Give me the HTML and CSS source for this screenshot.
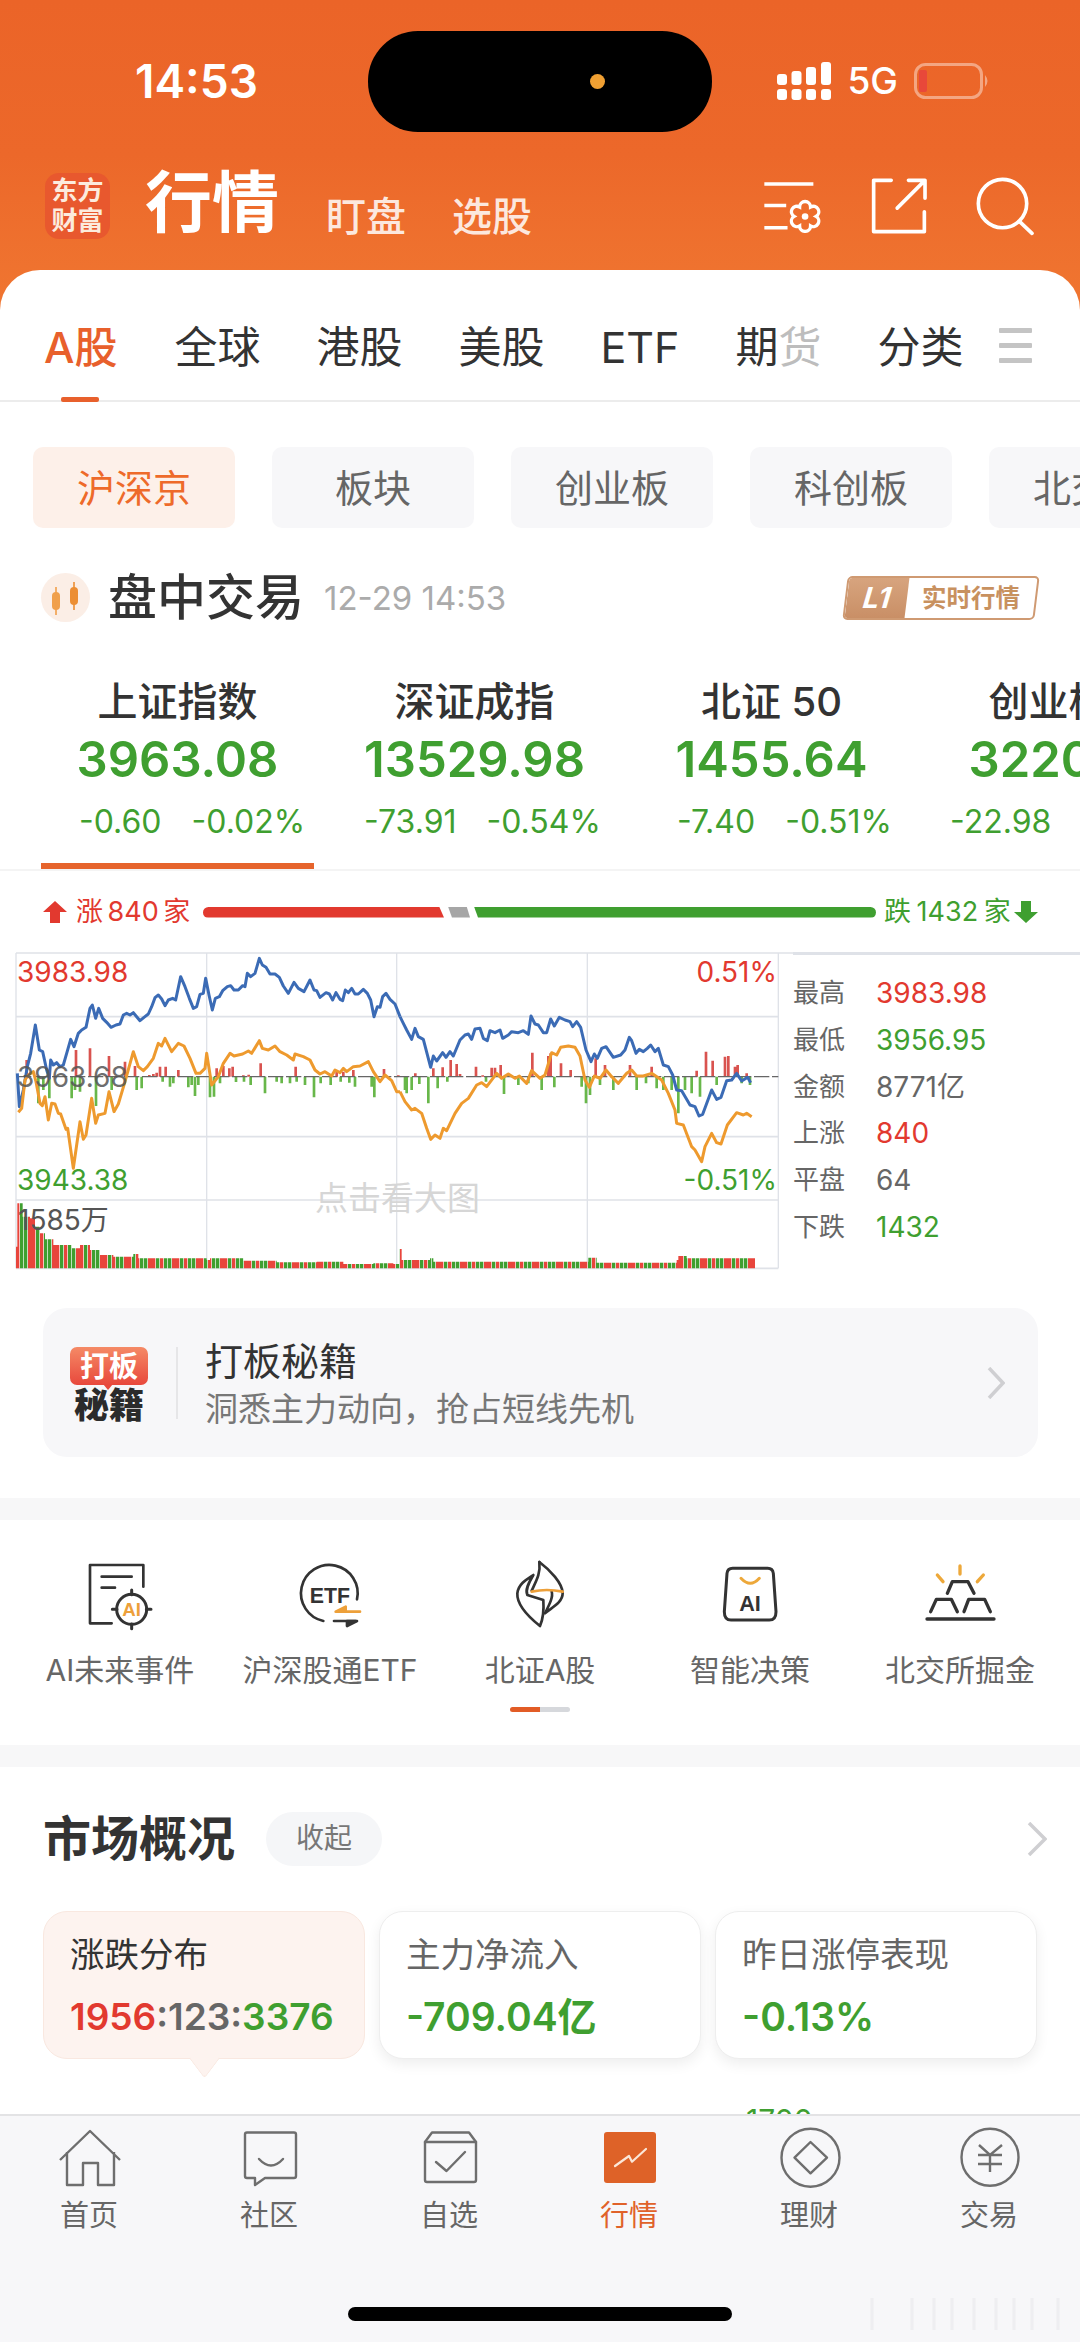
FILE: index.html
```html
<!DOCTYPE html>
<html lang="zh-CN">
<head>
<meta charset="utf-8">
<title>行情</title>
<link rel="stylesheet" href="styles.css">
</head>
<body>
<div class="phone">
  <main class="main">
    <header class="top">
      <div class="status">
        <span class="time">14:53</span>
        <div class="status-right">
          <svg class="signal" width="54" height="38" viewBox="0 0 54 38"><g fill="#fff"><rect x="0" y="27" width="10" height="11" rx="3"/><rect x="14.500" y="27" width="10" height="11" rx="3"/><rect x="29" y="27" width="10" height="11" rx="3"/><rect x="44" y="27" width="10" height="11" rx="3"/><rect x="0" y="12" width="10" height="11" rx="3"/><rect x="14.500" y="9" width="10" height="14" rx="3"/><rect x="29" y="5" width="10" height="18" rx="3"/><rect x="44" y="0" width="10" height="23" rx="3"/></g></svg>
          <span class="net">5G</span>
          <svg class="battery" width="76" height="36" viewBox="0 0 76 36"><rect x="1.500" y="1.500" width="66" height="33" rx="10" fill="none" stroke="#fff" stroke-opacity=".42" stroke-width="3"/><rect x="5" y="7" width="8" height="22" rx="2" fill="#E8483A"/><path d="M71 12q5 6 0 12z" fill="#fff" fill-opacity=".42"/></svg>
        </div>
      </div>
      <div class="island"><i class="island-dot"></i></div>
      <div class="titlebar">
        <div class="logo"><span>东方</span><span>财富</span></div>
        <h1 class="title">行情</h1>
        <a class="subnav subnav-first">盯盘</a>
        <a class="subnav">选股</a>
        <div class="top-icons">
          <svg width="61" height="53" viewBox="66 360 182 160" fill="none" stroke="#fff" stroke-width="11"><path d="M72 372H220M72 437H138M72 504H142"/><path d="M228 470A15 15 0 0 1 211.500 498.600A15 15 0 0 1 178.500 498.600A15 15 0 0 1 162 470A15 15 0 0 1 178.500 441.400A15 15 0 0 1 211.500 441.400A15 15 0 0 1 228 470Z" stroke-width="10"/><circle cx="195" cy="470" r="10" fill="#fff" stroke="none"/></svg>
          <svg width="58" height="58" viewBox="384 350 175 175" fill="none" stroke="#fff" stroke-width="11" stroke-linecap="round" stroke-linejoin="round"><path d="M448 360H395V515H548V455M466 444L546 364M500 360H550V414"/></svg>
          <svg width="59" height="59" viewBox="702 350 178 178" fill="none" stroke="#fff" stroke-width="11"><circle cx="785" cy="430" r="73"/><path d="M836 484L874 520" stroke-linecap="round"/></svg>
        </div>
      </div>
    </header>

    <section class="sheet">
      <nav class="tabs">
        <a class="tab tab-active">A股</a>
        <a class="tab">全球</a>
        <a class="tab">港股</a>
        <a class="tab">美股</a>
        <a class="tab">ETF</a>
        <a class="tab">期<span class="tab-fade">货</span></a>
        <a class="tab tab-last">分类</a>
        <span class="burger"><i></i><i></i><i></i></span>
      </nav>

      <div class="chips">
        <a class="chip chip-active">沪深京</a>
        <a class="chip">板块</a>
        <a class="chip">创业板</a>
        <a class="chip">科创板</a>
        <a class="chip">北交所</a>
      </div>

      <div class="session">
        <span class="session-icon">
          <svg width="49" height="49" viewBox="0 0 49 49"><g fill="#F0A04B"><rect x="11" y="19" width="8" height="18" rx="4"/><rect x="14.200" y="14" width="1.600" height="28"/><rect x="29" y="14" width="8" height="18" rx="4" fill="#EC8E33"/><rect x="32.200" y="9" width="1.600" height="28" fill="#EC8E33"/></g></svg>
        </span>
        <strong class="session-title">盘中交易</strong>
        <span class="session-time">12-29 14:53</span>
        <span class="badge"><b class="badge-l1">L1</b><span class="badge-text">实时行情</span></span>
      </div>

      <div class="indices">
        <div class="idx idx-active">
          <div class="idx-name">上证指数</div>
          <div class="idx-value">3963.08</div>
          <div class="idx-chg idx-chg-1"><span>-0.60</span><span>-0.02%</span></div>
        </div>
        <div class="idx">
          <div class="idx-name">深证成指</div>
          <div class="idx-value">13529.98</div>
          <div class="idx-chg idx-chg-2"><span>-73.91</span><span>-0.54%</span></div>
        </div>
        <div class="idx">
          <div class="idx-name">北证 50</div>
          <div class="idx-value">1455.64</div>
          <div class="idx-chg idx-chg-3"><span>-7.40</span><span>-0.51%</span></div>
        </div>
        <div class="idx">
          <div class="idx-name">创业板指</div>
          <div class="idx-value">3220.55</div>
          <div class="idx-chg idx-chg-4"><span>-22.98</span><span>-0.71%</span></div>
        </div>
      </div>

      <div class="breadth">
        <svg class="arrow" width="24" height="22" viewBox="0 0 24 22"><path d="M12 0L24 11H17V22H7V11H0Z" fill="#E2392F"/></svg>
        <span class="breadth-up">涨 840 家</span>
        <i class="bar bar-up"></i>
        <i class="bar bar-flat"></i>
        <i class="bar bar-down"></i>
        <span class="breadth-down">跌 1432 家</span>
        <svg class="arrow" width="24" height="22" viewBox="0 0 24 22"><path d="M12 22L24 11H17V0H7V11H0Z" fill="#3F9F30"/></svg>
      </div>

      <div class="chart-row">
        <div class="chart">
          <svg width="800" height="330" viewBox="0 0 2400 990" fill="none">
            <defs>
              <pattern id="vol" patternUnits="userSpaceOnUse" width="72" height="10">
                <rect width="72" height="10" fill="#fff"/>
                <rect x="0" width="10" height="10" fill="#3F9F30"/>
                <rect x="12" width="22" height="10" fill="#E8453C"/>
                <rect x="36" width="10" height="10" fill="#3F9F30"/>
                <rect x="48" width="10" height="10" fill="#E8453C"/>
                <rect x="60" width="10" height="10" fill="#3F9F30"/>
              </pattern>
            </defs>
            <g stroke="#DFE2E8" stroke-width="5">
              <path d="M48 9H2400M48 200H2335M48 560H2335M48 750H2335M48 955H2335"/>
              <path d="M48 9V955M620 9V955M1190 9V955M1762 9V955M2335 9V955" stroke-width="4"/>
            </g>
            <path d="M48 955V890L52 890V760H68V800H90V805H105V830H120V850H135V868H160V885H215V895H240V885H270V900H300V915H340V920H400V912H415V925H620V930H630V925H730V932H830V937H950V935H1030V942H1120V940H1180V942H1198V897H1205V930H1290V925H1300V935H1740V935H1765V923H1790V938H2030V930H2035V918H2060V925H2265V955Z" fill="url(#vol)"/>
            <g stroke-width="8">
              <g transform="translate(30)">
                <path stroke="#D9534F" d="M50 380V330M198 380V300M240 380V295M297 380V318M345 380V335M375 380V348M418 380V375M430 380V372M440 380V368M450 380V350M467 380V350M505 380V360M620 380V355M640 380V348M658 380V355M668 380V350M700 380V376M716 380V374M752 380V340M857 380V350M980 380V360M1000 380V365M1030 380V360M1122 380V357M1165 380V376"/>
                <path stroke="#68B74A" d="M85 380V460M100 380V420M118 380V445M185 380V445M195 380V420M210 380V425M258 380V468M305 380V420M380 380V420M395 380V415M458 380V395M480 380V410M490 380V400M535 380V412M545 380V405M555 380V438M565 380V405M600 380V442M612 380V440M630 380V400M678 380V396M702 380V395M722 380V405M765 380V430M800 380V395M815 380V400M840 380V400M860 380V395M885 380V405M912 380V442M932 380V400M962 380V405M992 380V395M1018 380V398M1035 380V410M1085 380V410M1093 380V442M1190 380V430"/>
              </g>
              <g transform="translate(1200)">
                <path stroke="#D9534F" d="M46 380V370M100 380V355M128 380V352M152 380V330M170 380V342M180 380V372M228 380V350M248 380V376M275 380V353M285 380V353M302 380V345M397 380V308M445 380V318M452 380V310M483 380V340M512 380V360M587 380V325M615 380V345M690 380V345M755 380V350M890 380V362M918 380V305M938 380V332M975 380V320M985 380V318M1005 380V350M1013 380V345M1040 380V370"/>
                <path stroke="#68B74A" d="M15 380V420M35 380V420M58 380V402M85 380V460M113 380V415M142 380V395M258 380V395M312 380V432M355 380V405M385 380V400M425 380V420M463 380V412M545 380V410M558 380V460M570 380V435M600 380V405M640 380V420M710 380V420M738 380V400M770 380V415M790 380V420M815 380V420M835 380V490M855 380V420M875 380V430M900 380V440M950 380V405M1025 380V400M1050 380V405"/>
              </g>
            </g>
            <path d="M48 380H2335" stroke="#666" stroke-width="4" stroke-dasharray="46 8"/>
            <g stroke-width="9" stroke-linejoin="round">
              <g transform="translate(30)">
                <polyline stroke="#3B6BB5" points="22,370 28,470 40,420 52,350 62,310 76,225 88,300 98,305 110,360 118,385 122,330 130,345 140,338 150,350 160,345 170,310 182,268 192,290 205,250 215,240 228,232 240,175 247,165 257,205 266,175 278,205 290,217 303,232 318,225 330,222 340,195 350,190 360,195 370,188 380,200 390,212 402,202 415,192 425,170 435,143 445,135 455,147 465,167 475,150 488,145 497,150 512,80 525,110 538,145 550,175 560,170 570,133 580,130 587,85 597,135 607,180 616,145 628,140 638,122 652,110 662,107 672,120 685,120 698,107 705,110 712,70 722,80 735,70 748,25 757,45 768,52 780,72 795,72 808,82 820,108 835,130 852,97 865,115 882,125 900,90 912,120 920,122 930,142 948,128 958,132 968,150 978,128 990,148 998,152 1006,120 1015,128 1025,115 1035,132 1045,132 1060,118 1072,130 1082,150 1092,200 1102,170 1110,172 1118,140 1128,130 1140,148 1155,162 1170,200"/>
                <polyline stroke="#EE9A2E" points="25,487 35,475 45,390 55,375 70,365 78,395 90,460 97,467 105,440 115,510 125,460 135,462 145,490 152,492 168,538 173,535 190,655 210,515 220,568 228,555 245,445 257,520 265,495 285,490 297,425 312,485 325,462 345,395 370,305 385,350 400,362 412,350 430,325 445,280 455,288 465,265 485,305 505,280 522,288 540,325 558,370 570,370 585,355 590,310 605,405 625,380 640,340 660,310 672,318 698,312 715,303 725,310 748,272 757,295 775,300 795,288 810,305 830,315 850,330 855,312 880,320 900,330 915,360 930,372 945,365 965,378 975,360 990,368 1000,355 1010,365 1030,350 1050,348 1075,335 1090,365 1110,395 1125,375 1145,392 1160,425 1170,425"/>
              </g>
              <g transform="translate(1200)">
                <polyline stroke="#3B6BB5" points="0,200 10,220 20,240 35,268 45,235 55,260 70,268 92,352 100,318 110,333 128,308 138,322 150,305 160,318 180,270 195,255 205,252 215,268 225,237 240,235 250,265 262,272 270,242 285,248 300,240 308,265 325,255 335,245 355,248 370,242 385,253 393,198 405,222 415,225 430,248 440,248 452,207 463,228 478,202 495,210 510,215 518,230 530,215 542,232 558,300 573,335 583,312 592,325 605,295 618,290 640,322 662,315 675,300 688,262 695,272 708,310 718,298 730,305 742,295 752,285 765,305 775,295 790,345 805,350 818,375 830,420 845,422 870,465 885,470 897,498 908,493 935,420 950,448 963,442 980,392 995,390 1010,370 1025,393 1043,382 1052,398"/>
                <polyline stroke="#EE9A2E" points="0,425 15,455 35,480 45,475 65,490 80,535 92,568 105,555 120,565 130,535 140,542 165,490 185,460 205,445 230,405 245,398 260,410 290,370 305,385 325,372 345,385 358,378 380,400 395,362 420,385 435,375 455,308 470,315 482,292 505,288 525,292 540,318 555,390 568,412 583,378 600,385 618,360 635,380 655,400 680,370 695,360 710,378 730,378 755,370 785,390 805,430 825,480 830,520 850,525 875,590 885,600 905,635 915,590 935,550 950,578 963,582 982,525 1010,488 1030,495 1040,490 1055,500"/>
              </g>
            </g>
          </svg>
          <span class="lbl lbl-tl">3983.98</span>
          <span class="lbl lbl-ml">3963.68</span>
          <span class="lbl lbl-bl">3943.38</span>
          <span class="lbl lbl-tr">0.51%</span>
          <span class="lbl lbl-br">-0.51%</span>
          <span class="lbl lbl-vol">1585万</span>
          <span class="lbl lbl-tip">点击看大图</span>
        </div>
        <dl class="stats">
          <div class="stat"><dt>最高</dt><dd class="up">3983.98</dd></div>
          <div class="stat"><dt>最低</dt><dd class="down">3956.95</dd></div>
          <div class="stat"><dt>金额</dt><dd>8771亿</dd></div>
          <div class="stat"><dt>上涨</dt><dd class="up">840</dd></div>
          <div class="stat"><dt>平盘</dt><dd>64</dd></div>
          <div class="stat"><dt>下跌</dt><dd class="down">1432</dd></div>
        </dl>
      </div>

      <div class="promo">
        <div class="promo-logo">
          <span class="promo-bubble">打板</span>
          <span class="promo-word">秘籍</span>
        </div>
        <div class="promo-body">
          <div class="promo-title">打板秘籍</div>
          <div class="promo-sub">洞悉主力动向，抢占短线先机</div>
        </div>
        <svg class="promo-chev" width="18" height="32" viewBox="0 0 18 32" fill="none"><path d="M2 1L16 16L2 31" stroke="#CFCFD2" stroke-width="3.500"/></svg>
      </div>
    </section>

    <div class="gap"></div>

    <section class="features">
      <div class="feature-grid">
        <a class="feature">
          <svg width="72" height="72" viewBox="47 30 216 216" fill="none" stroke="#333" stroke-width="8" stroke-linecap="round" stroke-linejoin="round"><path d="M225 110V45H65V220H130"/><path d="M100 80H190M100 113H140"/><circle cx="190" cy="178" r="45" stroke-width="9"/><path d="M190 120V134M190 222V236M132 178H146M234 178H248" stroke-width="9"/><text x="190" y="199" class="ic-text ic-text-ai" text-anchor="middle">AI</text></svg>
          <span>AI未来事件</span>
        </a>
        <a class="feature">
          <svg width="72" height="72" viewBox="677 30 216 216" fill="none" stroke="#333" stroke-width="8" stroke-linecap="round" stroke-linejoin="round"><path d="M866 148A85 85 0 1 0 765 213"/><text x="785" y="158" class="ic-text ic-text-etf" text-anchor="middle">ETF</text><path d="M808 185H875" stroke="#EDA03A"/><path d="M802 185L832 170V185Z" stroke="#EDA03A" fill="#EDA03A"/><path d="M797 213H862"/><path d="M866 213L836 228V213Z" fill="#333"/></svg>
          <span>沪深股通ETF</span>
        </a>
        <a class="feature feature-now">
          <svg width="72" height="72" viewBox="1302 30 216 216" fill="none" stroke="#333" stroke-width="8" stroke-linecap="round" stroke-linejoin="round"><path d="M1408 36C1440 60 1478 100 1478 130C1478 160 1440 175 1425 190C1440 160 1450 140 1445 125"/><path d="M1408 36C1412 70 1400 90 1385 122"/><path d="M1410 228C1375 200 1340 165 1342 130C1345 100 1375 85 1390 75C1375 100 1365 120 1372 135L1420 150C1422 180 1420 205 1410 228Z"/><path d="M1385 125Q1430 115 1478 125" stroke="#EDA03A"/></svg>
          <span>北证A股</span>
        </a>
        <a class="feature">
          <svg width="72" height="72" viewBox="69 30 216 216" fill="none" stroke="#333" stroke-width="9" stroke-linecap="round" stroke-linejoin="round"><path d="M125 55H230Q245 55 247 70L255 185Q255 210 235 210H120Q100 210 100 185L108 70Q110 55 125 55Z"/><path d="M150 85Q178 115 205 85" stroke="#EDA83A"/><text x="177" y="183" class="ic-text ic-text-bag" text-anchor="middle">AI</text></svg>
          <span>智能决策</span>
        </a>
        <a class="feature">
          <svg width="72" height="72" viewBox="698 30 216 216" fill="none" stroke="#333" stroke-width="10" stroke-linecap="round" stroke-linejoin="round"><path d="M806 48V72M738 75L755 95M876 75L858 95" stroke="#EDA83A"/><path d="M768 130L783 95H830L848 130M718 185L735 148H780L798 185M818 185L832 148H880L897 185M707 207H908"/></svg>
          <span>北交所掘金</span>
        </a>
      </div>
      <div class="pager"><i class="pager-on"></i><i></i></div>
    </section>

    <div class="gap gap-2"></div>

    <section class="market">
      <div class="market-head">
        <h2 class="market-title">市场概况</h2>
        <a class="pill">收起</a>
        <svg class="market-chev" width="20" height="34" viewBox="0 0 20 34" fill="none"><path d="M2 1L18 17L2 33" stroke="#CFCFD2" stroke-width="3.500"/></svg>
      </div>
      <div class="cards">
        <div class="card card-active">
          <div class="card-title">涨跌分布</div>
          <div class="card-value"><span class="up">1956</span><span class="mid">:123:</span><span class="down">3376</span></div>
        </div>
        <div class="card">
          <div class="card-title">主力净流入</div>
          <div class="card-value card-value-lg down">-709.04亿</div>
        </div>
        <div class="card">
          <div class="card-title">昨日涨停表现</div>
          <div class="card-value card-value-lg down">-0.13%</div>
        </div>
      </div>
    </section>
    <span class="peek">1700</span>
  </main>

  <nav class="tabbar">
    <a class="tb">
      <svg width="90" height="64" viewBox="0 0 90 64" fill="none" stroke="#6E6E6E" stroke-width="2.400" stroke-linejoin="round"><path d="M15 34L45 5L75 34M22 26V59H38V37H53V59H69V26"/></svg>
      <span>首页</span>
    </a>
    <a class="tb">
      <svg width="90" height="64" viewBox="0 0 90 64" fill="none" stroke="#6E6E6E" stroke-width="2.400" stroke-linejoin="round" stroke-linecap="round"><path d="M22 6.500H69a2 2 0 0 1 2 2V50a2 2 0 0 1-2 2H40L30 59V52H22a2 2 0 0 1-2-2V8.500a2 2 0 0 1 2-2Z"/><path d="M34 33Q46 46 58 33"/></svg>
      <span>社区</span>
    </a>
    <a class="tb">
      <svg width="90" height="64" viewBox="0 0 90 64" fill="none" stroke="#6E6E6E" stroke-width="2.400" stroke-linejoin="round" stroke-linecap="round"><path d="M27 6.500H64L71 16V54a2 2 0 0 1-2 2H22a2 2 0 0 1-2-2V16Z"/><path d="M20 16H71M31 36L41.500 45L60 26"/></svg>
      <span>自选</span>
    </a>
    <a class="tb tb-active">
      <svg width="90" height="64" viewBox="0 0 90 64" fill="none"><rect x="19" y="6" width="52" height="51" rx="3" fill="#DE6228"/><path d="M30 40L44 30L47 35.700L61 23" stroke="#FBE7D8" stroke-width="2.200" stroke-linecap="round" stroke-linejoin="round"/></svg>
      <span>行情</span>
    </a>
    <a class="tb">
      <svg width="90" height="64" viewBox="0 0 90 64" fill="none" stroke="#6E6E6E" stroke-width="2.400" stroke-linejoin="round"><circle cx="45.500" cy="31.700" r="29"/><path d="M45.500 16L62 31.700L45.500 47.300L29.500 31.700Z"/></svg>
      <span>理财</span>
    </a>
    <a class="tb">
      <svg width="90" height="64" viewBox="0 0 90 64" fill="none" stroke="#6E6E6E" stroke-width="2.400"><circle cx="45" cy="31.300" r="28.500"/><path d="M34 19L45 29L57 19M33 29H57M33 38H57M45 29V46"/></svg>
      <span>交易</span>
    </a>
  </nav>
  <svg class="mark" width="200" height="38" viewBox="0 0 200 38" fill="none" stroke="#C9C9CC" stroke-width="3"><path d="M4 2V34M44 2V34M66 2V34M84 2V34M106 2V34M128 2V34M146 2V34M164 2V34M190 2V34" stroke-opacity=".18"/></svg>
  <i class="home-bar"></i>
</div>
</body>
</html>
```

FILE: styles.css
```css
* { box-sizing: border-box; }
html, body { margin: 0; padding: 0; }
body {
  width: 1080px;
  height: 2342px;
  overflow: hidden;
  background: #fff;
  font-family: Inter, "Noto Sans CJK SC", sans-serif;
  color: #333;
}
a { color: inherit; text-decoration: none; }
svg { display: block; }
i { display: block; font-style: normal; }

.phone { position: relative; width: 1080px; height: 2342px; display: flex; flex-direction: column; overflow: hidden; }
.main { position: relative; flex: 0 0 2114px; height: 2114px; overflow: hidden; background: #fff; }

/* orange header */
.top { position: relative; height: 310px; padding-top: 51px; background: linear-gradient(180deg, #EB6428 0%, #EC682A 50%, #F07631 100%); }
.status { display: flex; align-items: center; justify-content: space-between; height: 60px; padding: 0 90px 0 135px; }
.time { font-size: 46px; font-weight: 600; line-height: 60px; color: #fff; }
.status-right { display: flex; align-items: center; }
.signal { margin-right: 16px; }
.net { font-size: 37px; font-weight: 500; line-height: 40px; color: #fff; margin-right: 16px; }
.island { position: absolute; left: 368px; top: 31px; width: 344px; height: 101px; border-radius: 50px; background: #000; }
.island-dot { position: absolute; left: 222px; top: 43px; width: 15px; height: 15px; border-radius: 50%; background: #F0A033; }

.titlebar { display: flex; align-items: flex-end; height: 66px; margin-top: 62px; padding-left: 45px; }
.logo { width: 65px; height: 66px; border-radius: 14px; background: #E8582E; display: flex; flex-direction: column; align-items: center; justify-content: center; color: #FCEBDD; font-size: 26px; line-height: 30px; font-weight: 700; }
.title { margin: 0 0 0 35px; font-size: 67px; line-height: 66px; font-weight: 700; color: #fff; height: 66px; position: relative; top: -3px; }
.subnav { font-size: 40px; line-height: 44px; font-weight: 500; color: rgba(255,255,255,.85); margin-left: 46px; margin-bottom: 0; }
.subnav-first { margin-left: 47px; }
.top-icons { display: flex; align-items: center; gap: 47px; margin-left: auto; padding-right: 46px; align-self: center; }

/* sheet */
.sheet { position: relative; margin-top: -40px; border-radius: 40px 40px 0 0; background: #fff; }
.tabs { position: relative; display: flex; align-items: center; gap: 56px; height: 132px; padding: 24px 0 0 45px; border-bottom: 2px solid #ECECEC; }
.tab { position: relative; font-size: 43px; line-height: 60px; color: #333; white-space: nowrap; }
.tab-active { color: #E8602C; font-weight: 500; margin-right: 1px; margin-left: -1px; }
.tab-active::after { content: ""; position: absolute; left: 17px; top: 80px; width: 38px; height: 5px; border-radius: 2px; background: #E8602C; }
.tab-fade { color: #BDBDBD; }
.burger { position: absolute; right: 48px; top: 58px; display: flex; flex-direction: column; gap: 10px; }
.burger i { width: 33px; height: 5px; background: #C4C4C4; border-radius: 1px; }

.chips { display: flex; gap: 37px; padding: 45px 0 0 33px; overflow: hidden; }
.chip { flex: 0 0 202px; height: 81px; border-radius: 10px; background: #F7F7F9; color: #666; font-size: 38px; line-height: 83px; text-align: center; }
.chip-active { background: #FDF0E9; color: #EE6A2A; }

.session { display: flex; align-items: center; height: 49px; margin-top: 45px; padding: 0 43px 0 41px; }
.session-icon { width: 49px; height: 49px; border-radius: 50%; background: #FBEEE6; }
.session-title { margin-left: 18px; font-size: 49px; line-height: 50px; font-weight: 500; color: #333; }
.session-time { margin-left: 20px; font-size: 33px; line-height: 42px; color: #ABABAB; }
.badge { margin-left: auto; display: flex; width: 192px; height: 44px; border: 2px solid #CF9A72; border-radius: 5px; transform: skewX(-7deg); overflow: hidden; background: #fff; }
.badge-l1 { flex: 0 0 60px; background: linear-gradient(180deg, #D7A47E, #C98F66); color: #fff; font-size: 29px; line-height: 40px; font-style: italic; font-weight: 700; text-align: center; }
.badge-text { flex: 1; color: #C8915F; font-size: 24.500px; line-height: 40px; font-weight: 700; text-align: center; transform: skewX(7deg); white-space: nowrap; }

.indices { display: flex; margin-top: 56px; padding-left: 29px; border-bottom: 2px solid #F4F4F4; height: 193px; overflow: hidden; }
.idx { position: relative; flex: 0 0 297px; text-align: center; white-space: nowrap; }
.idx-active::after { content: ""; position: absolute; left: 12px; bottom: 0; width: 273px; height: 6px; background: #E6642C; }
.idx-name { font-size: 40px; line-height: 48px; font-weight: 500; color: #333; }
.idx-value { margin-top: 2px; font-size: 49px; line-height: 64px; font-weight: 600; color: #3F9F30; }
.idx-chg { display: flex; gap: 30px; margin-top: 10px; font-size: 32px; line-height: 40px; color: #3F9F30; }
.idx-chg-1 { padding-left: 50px; }
.idx-chg-2 { padding-left: 38px; }
.idx-chg-3 { padding-left: 54px; }
.idx-chg-4 { padding-left: 30px; }

.breadth { display: flex; align-items: center; height: 44px; margin-top: 19px; padding-left: 43px; font-size: 27px; line-height: 44px; white-space: nowrap; }
.breadth-up { width: 113px; margin-left: 9px; margin-right: 14px; color: #E2392F; word-spacing: -3px; }
.breadth-down { width: 125px; margin-left: 8px; margin-right: 5px; color: #3F9F30; word-spacing: -2px; }
.bar { height: 11px; }
.bar-up { width: 241px; background: #E2392F; border-radius: 6px 0 0 6px; clip-path: polygon(0 0, 98% 0, 100% 100%, 0 100%); }
.bar-flat { width: 22px; margin-left: 4px; background: #A6A6A6; clip-path: polygon(0 0, 85% 0, 100% 100%, 18% 100%); }
.bar-down { width: 402px; margin-left: 4px; background: #3F9F30; border-radius: 0 6px 6px 0; clip-path: polygon(0 0, 100% 0, 100% 100%, 1% 100%); }

.chart-row { display: flex; margin-top: 16px; height: 330px; }
.chart { position: relative; flex: 0 0 800px; height: 330px; }
.lbl { position: absolute; font-size: 28px; line-height: 32px; white-space: nowrap; }
.lbl-tl { left: 17px; top: 6px; color: #E2392F; }
.lbl-ml { left: 17px; top: 111px; color: #555; opacity: .85; }
.lbl-bl { left: 17px; top: 214px; color: #3F9F30; }
.lbl-tr { right: 23px; top: 6px; color: #E2392F; }
.lbl-br { right: 23px; top: 214px; color: #3F9F30; }
.lbl-vol { left: 18px; top: 254px; color: #555; }
.lbl-tip { left: 315px; top: 230px; font-size: 33px; line-height: 36px; color: #D6D6D6; }
.stats { margin: 2px 0 0 -7px; padding: 15px 0 0; flex: 1; border-top: 3px solid #DFE2E8; }
.stat { display: flex; align-items: center; height: 46.700px; margin: 0; }
.stat dt { width: 83px; font-size: 26px; color: #666; line-height: 46px; }
.stat dd { margin: 0; font-size: 28px; line-height: 46px; color: #666; }
.up { color: #E2392F !important; }
.down { color: #3F9F30 !important; }

.promo { position: relative; display: flex; align-items: center; height: 149px; margin: 28px 42px 0 43px; padding: 0 33px 0 27px; border-radius: 24px; background: #F7F7F9; }
.promo-logo { position: relative; flex: 0 0 78px; height: 72px; display: flex; flex-direction: column; align-items: center; }
.promo-bubble { position: relative; width: 78px; height: 38px; border-radius: 7px; background: linear-gradient(180deg, #F58A66, #E8483C); color: #fff; font-size: 29px; line-height: 40px; font-weight: 700; text-align: center; white-space: nowrap; }
.promo-bubble::after { content: ""; position: absolute; left: 33px; bottom: -5px; width: 0; height: 0; border-left: 5px solid transparent; border-right: 5px solid transparent; border-top: 6px solid #E8483C; }
.promo-word { margin-top: 4px; font-size: 35px; line-height: 32px; font-weight: 900; color: #2B2B2B; white-space: nowrap; }
.promo-body { margin-left: 28px; padding-left: 27px; border-left: 2px solid #E6E6E8; height: 72px; display: flex; flex-direction: column; justify-content: center; }
.promo-title { font-size: 38px; line-height: 44px; color: #333; margin-top: -7px; }
.promo-sub { font-size: 33px; line-height: 44px; color: #777; margin-top: 4px; white-space: nowrap; margin-bottom: -11px; }
.promo-chev { margin-left: auto; }

.gap { height: 22px; margin-top: 41px; background: #F7F7F8; }
.gap-2 { margin-top: 0; }

.features { padding: 40px 15px 33px; }
.feature-grid { display: grid; grid-template-columns: repeat(5, 210px); }
.feature { display: flex; flex-direction: column; align-items: center; font-size: 30px; line-height: 40px; color: #666; white-space: nowrap; }
.feature svg { margin-bottom: 18px; }
.ic-text { font-family: "Liberation Sans", sans-serif; font-weight: 700; stroke: none; }
.ic-text-ai { font-size: 56px; fill: #EDA03A; }
.ic-text-etf { font-size: 64px; fill: #333; }
.ic-text-bag { font-size: 65px; fill: #333; }
.pager { display: flex; justify-content: center; margin-top: 17px; }
.pager i { width: 30px; height: 5px; background: #D6D8DC; border-radius: 0 3px 3px 0; }
.pager .pager-on { background: #E25C26; border-radius: 3px 0 0 3px; }

.market { padding: 45px 42px 0 43px; }
.market-head { display: flex; align-items: center; height: 54px; }
.market-title { margin: -1px 0 0 0; font-size: 48px; line-height: 54px; font-weight: 700; color: #333; }
.pill { margin-left: 31px; width: 116px; height: 54px; border-radius: 27px; background: #F5F6F8; font-size: 28px; line-height: 52px; text-align: center; color: #777; }
.market-chev { margin-left: auto; margin-right: -9px; }
.cards { display: grid; grid-template-columns: repeat(3, 322px); gap: 14px; margin-top: 45px; }
.card { position: relative; height: 148px; padding: 19px 0 0 26px; border: 1px solid #EEE; border-radius: 24px; background: #fff; box-shadow: 0 5px 14px rgba(0,0,0,.07); white-space: nowrap; }
.card-active { background: #FDF3EF; border-color: #F9E8E0; box-shadow: none; }
.card-active::after { content: ""; position: absolute; left: 148px; bottom: -13px; width: 24px; height: 24px; background: #FDF3EF; border-right: 1px solid #F9E8E0; border-bottom: 1px solid #F9E8E0; transform: rotate(45deg) skew(8deg, 8deg); border-radius: 0 0 4px 0; }
.card-title { font-size: 34.500px; line-height: 48px; color: #666; }
.card-active .card-title { color: #333; }
.card-value { margin-top: 16px; font-size: 37px; line-height: 44px; font-weight: 600; }
.card-value-lg { font-size: 39px; }
.mid { color: #666; }

.peek { position: absolute; left: 746px; top: 2105px; font-size: 30px; line-height: 30px; color: #3F9F30; }

.tabbar { flex: 1; display: grid; grid-template-columns: repeat(6, 180px); grid-auto-rows: max-content; padding-top: 10px; border-top: 2px solid #E3E3E5; background: #F7F7F9; }
.tb { display: flex; flex-direction: column; align-items: center; font-size: 29px; line-height: 40px; color: #666; }
.tb span { margin-top: 6px; margin-left: -2px; }
.tb-active { color: #E0622A; }
.home-bar { position: absolute; left: 348px; top: 2307px; width: 384px; height: 14px; border-radius: 7px; background: #000; }
.mark { position: absolute; left: 868px; top: 2296px; }
```
